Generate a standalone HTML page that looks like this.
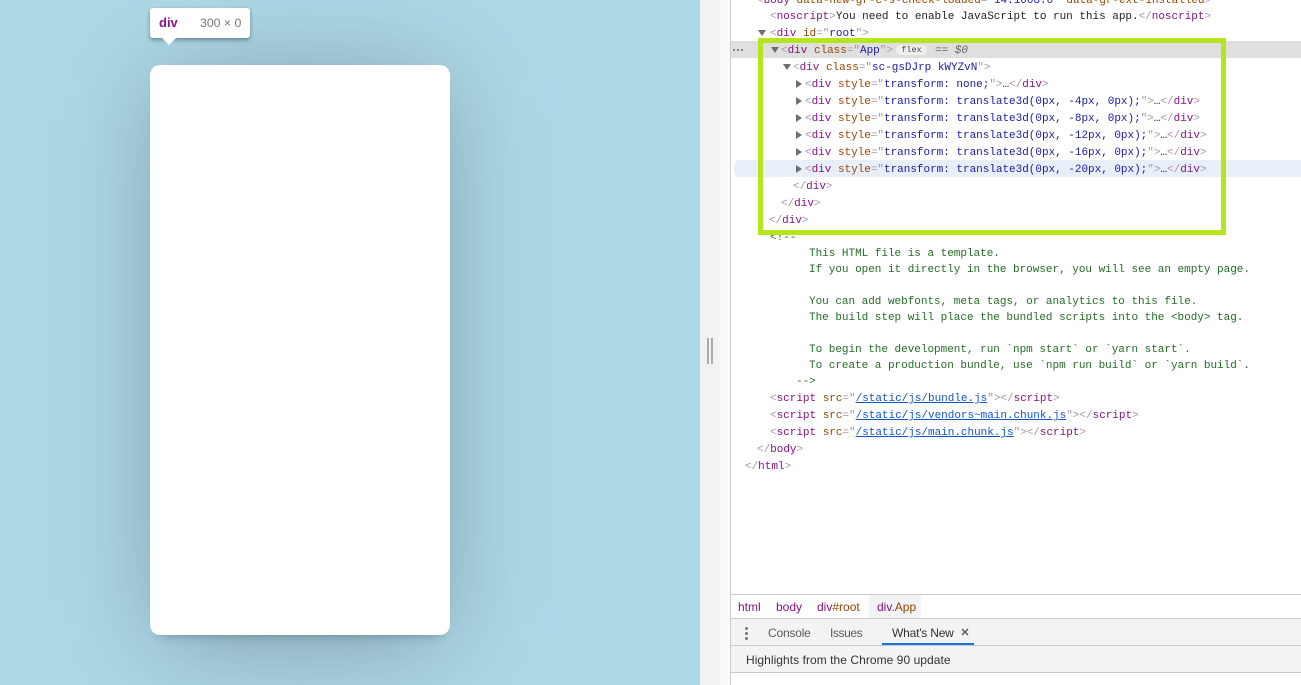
<!DOCTYPE html>
<html>
<head>
<meta charset="utf-8">
<style>
html,body{margin:0;padding:0;width:1301px;height:685px;overflow:hidden;background:#fff}
body{position:relative;font-family:"Liberation Sans",sans-serif}
#left{position:absolute;left:0;top:0;width:700px;height:685px;background:#add8e6;overflow:hidden}
#shade{position:absolute;left:0;top:0;width:700px;height:685px;
background:linear-gradient(90deg,rgba(50,50,73,0) 10px,rgba(50,50,73,.002) 35px,rgba(50,50,73,.009) 60px,rgba(50,50,73,.025) 85px,rgba(50,50,73,.06) 110px,rgba(50,50,73,.117) 135px,rgba(50,50,73,.19) 160px,rgba(50,50,73,.263) 185px,rgba(50,50,73,.32) 210px,rgba(50,50,73,.355) 235px,rgba(50,50,73,.371) 260px,rgba(50,50,73,.38) 300px,rgba(50,50,73,.371) 340px,rgba(50,50,73,.355) 365px,rgba(50,50,73,.32) 390px,rgba(50,50,73,.263) 415px,rgba(50,50,73,.19) 440px,rgba(50,50,73,.117) 465px,rgba(50,50,73,.06) 490px,rgba(50,50,73,.025) 515px,rgba(50,50,73,.009) 540px,rgba(50,50,73,.002) 565px,rgba(50,50,73,0) 590px);
-webkit-mask-image:linear-gradient(180deg,rgba(0,0,0,.023) -20px,rgba(0,0,0,.067) 5px,rgba(0,0,0,.159) 30px,rgba(0,0,0,.309) 55px,rgba(0,0,0,.5) 80px,rgba(0,0,0,.691) 105px,rgba(0,0,0,.841) 130px,rgba(0,0,0,.933) 155px,rgba(0,0,0,.977) 180px,#000 220px,#000 500px,rgba(0,0,0,.977) 540px,rgba(0,0,0,.933) 565px,rgba(0,0,0,.841) 590px,rgba(0,0,0,.691) 615px,rgba(0,0,0,.5) 640px,rgba(0,0,0,.309) 665px,rgba(0,0,0,.159) 690px);
mask-image:linear-gradient(180deg,rgba(0,0,0,.023) -20px,rgba(0,0,0,.067) 5px,rgba(0,0,0,.159) 30px,rgba(0,0,0,.309) 55px,rgba(0,0,0,.5) 80px,rgba(0,0,0,.691) 105px,rgba(0,0,0,.841) 130px,rgba(0,0,0,.933) 155px,rgba(0,0,0,.977) 180px,#000 220px,#000 500px,rgba(0,0,0,.977) 540px,rgba(0,0,0,.933) 565px,rgba(0,0,0,.841) 590px,rgba(0,0,0,.691) 615px,rgba(0,0,0,.5) 640px,rgba(0,0,0,.309) 665px,rgba(0,0,0,.159) 690px)}
#card{position:absolute;left:150px;top:65px;width:300px;height:570px;background:#fff;border-radius:10px;box-shadow:0 10px 10px -10px rgba(50,50,73,.4)}
#tip{position:absolute;left:150px;top:8px;width:100px;height:30px;background:#fff;border-radius:3px;box-shadow:0 2px 4px rgba(0,0,0,.35);font-size:12px;line-height:30px}
#tip b{position:absolute;left:9px;color:#881391;font-size:13px;top:0}
#tip span{position:absolute;left:50px;color:#777;font-size:12.3px;top:0;white-space:pre}
#tipa{position:absolute;left:162px;top:31px;width:14px;height:14px}
#split{position:absolute;left:700px;top:0;width:30px;height:685px;background:linear-gradient(90deg,#f1f1f1 0,#f3f3f3 20px,#fafafa 20px,#fafafa 30px)}
#split i{position:absolute;top:338px;width:2px;height:26px;background:#aaa}
#bl{position:absolute;left:730px;top:0;width:1px;height:685px;background:#ccc}
.l{position:absolute;white-space:pre;font:11px/17px "Liberation Mono",monospace;height:17px;letter-spacing:-.02px;color:#a894a6}
.n{color:#881280}.a{color:#994500}.v{color:#1a1aa6}.c{color:#236e25}.k{color:#1155cc;text-decoration:underline}.t{color:#222}
.rs{position:absolute;left:731px;top:41px;width:570px;height:17px;background:#dfdfdf}
.rh{position:absolute;left:734px;top:160px;width:567px;height:17px;background:#e9eff9;border-radius:5px 0 0 5px}
.ar{position:absolute;background:#6e6e6e}
.r{width:6px;height:8px;clip-path:polygon(0 0,100% 50%,0 100%)}
.d{width:8px;height:6px;clip-path:polygon(0 0,100% 0,50% 100%)}
#flex{position:absolute;left:896px;top:45px;width:31px;height:10px;background:#efefef;border-radius:5px;font:8.5px/11px "Liberation Mono",monospace;color:#444;text-align:center}
#box{position:absolute;left:758px;top:38px;width:458px;height:187px;border:5px solid #b5e61d}
.ui{position:absolute;font-size:12px;line-height:16px;white-space:pre}
.h{position:absolute;left:731px;width:570px;height:1px;background:#ccc}
.dot{position:absolute;width:2px;height:2px;background:#888;top:49px}
</style>
</head>
<body>
<div id="left">
  <div id="shade"></div>
  <div id="card"></div>
  <div id="tip"><b>div</b><span>300 × 0</span></div>
  <svg id="tipa" viewBox="0 0 14 14"><path d="M0 7H14L7 14Z" fill="#fff"/></svg>
</div>
<div id="split"><i style="left:7px"></i><i style="left:11px"></i></div>
<div id="bl"></div>

<div class="rs"></div>
<div class="rh"></div>

<div class="l" style="left:757px;top:-7px">&lt;<span class="n">body</span> <span class="a">data-new-gr-c-s-check-loaded</span>="<span class="v">14.1008.0</span>" <span class="a">data-gr-ext-installed</span>&gt;</div>
<div class="l" style="left:770px;top:9px">&lt;<span class="n">noscript</span>&gt;<span class="t">You need to enable JavaScript to run this app.</span>&lt;/<span class="n">noscript</span>&gt;</div>
<div class="ar d" style="left:758px;top:30px"></div>
<div class="l" style="left:770px;top:26px">&lt;<span class="n">div</span> <span class="a">id</span>="<span class="v">root</span>"&gt;</div>
<div class="dot" style="left:733px"></div><div class="dot" style="left:737px"></div><div class="dot" style="left:741px"></div>
<div class="ar d" style="left:771px;top:47px"></div>
<div class="l" style="left:781px;top:43px">&lt;<span class="n">div</span> <span class="a">class</span>="<span class="v">App</span>"&gt;</div>
<div id="flex">flex</div>
<div class="l" style="left:935px;top:43px;color:#666">== <i>$0</i></div>
<div class="ar d" style="left:783px;top:64px"></div>
<div class="l" style="left:793px;top:60px">&lt;<span class="n">div</span> <span class="a">class</span>="<span class="v">sc-gsDJrp kWYZvN</span>"&gt;</div>

<div class="ar r" style="left:796px;top:80px"></div>
<div class="l" style="left:805px;top:77px">&lt;<span class="n">div</span> <span class="a">style</span>="<span class="v">transform: none;</span>"&gt;<span class="t">…</span>&lt;/<span class="n">div</span>&gt;</div>
<div class="ar r" style="left:796px;top:97px"></div>
<div class="l" style="left:805px;top:94px">&lt;<span class="n">div</span> <span class="a">style</span>="<span class="v">transform: translate3d(0px, -4px, 0px);</span>"&gt;<span class="t">…</span>&lt;/<span class="n">div</span>&gt;</div>
<div class="ar r" style="left:796px;top:114px"></div>
<div class="l" style="left:805px;top:111px">&lt;<span class="n">div</span> <span class="a">style</span>="<span class="v">transform: translate3d(0px, -8px, 0px);</span>"&gt;<span class="t">…</span>&lt;/<span class="n">div</span>&gt;</div>
<div class="ar r" style="left:796px;top:131px"></div>
<div class="l" style="left:805px;top:128px">&lt;<span class="n">div</span> <span class="a">style</span>="<span class="v">transform: translate3d(0px, -12px, 0px);</span>"&gt;<span class="t">…</span>&lt;/<span class="n">div</span>&gt;</div>
<div class="ar r" style="left:796px;top:148px"></div>
<div class="l" style="left:805px;top:145px">&lt;<span class="n">div</span> <span class="a">style</span>="<span class="v">transform: translate3d(0px, -16px, 0px);</span>"&gt;<span class="t">…</span>&lt;/<span class="n">div</span>&gt;</div>
<div class="ar r" style="left:796px;top:165px"></div>
<div class="l" style="left:805px;top:162px">&lt;<span class="n">div</span> <span class="a">style</span>="<span class="v">transform: translate3d(0px, -20px, 0px);</span>"&gt;<span class="t">…</span>&lt;/<span class="n">div</span>&gt;</div>

<div class="l" style="left:793px;top:179px">&lt;/<span class="n">div</span>&gt;</div>
<div class="l" style="left:781px;top:196px">&lt;/<span class="n">div</span>&gt;</div>
<div class="l" style="left:769px;top:213px">&lt;/<span class="n">div</span>&gt;</div>

<div class="l c" style="left:770px;top:230px">&lt;!--</div>
<div class="l c" style="left:809px;top:246px">This HTML file is a template.</div>
<div class="l c" style="left:809px;top:262px">If you open it directly in the browser, you will see an empty page.</div>
<div class="l c" style="left:809px;top:294px">You can add webfonts, meta tags, or analytics to this file.</div>
<div class="l c" style="left:809px;top:310px">The build step will place the bundled scripts into the &lt;body&gt; tag.</div>
<div class="l c" style="left:809px;top:342px">To begin the development, run `npm start` or `yarn start`.</div>
<div class="l c" style="left:809px;top:358px">To create a production bundle, use `npm run build` or `yarn build`.</div>
<div class="l c" style="left:796px;top:374px">--&gt;</div>

<div class="l" style="left:770px;top:391px">&lt;<span class="n">script</span> <span class="a">src</span>="<span class="k">/static/js/bundle.js</span>"&gt;&lt;/<span class="n">script</span>&gt;</div>
<div class="l" style="left:770px;top:408px">&lt;<span class="n">script</span> <span class="a">src</span>="<span class="k">/static/js/vendors~main.chunk.js</span>"&gt;&lt;/<span class="n">script</span>&gt;</div>
<div class="l" style="left:770px;top:425px">&lt;<span class="n">script</span> <span class="a">src</span>="<span class="k">/static/js/main.chunk.js</span>"&gt;&lt;/<span class="n">script</span>&gt;</div>
<div class="l" style="left:757px;top:442px">&lt;/<span class="n">body</span>&gt;</div>
<div class="l" style="left:745px;top:459px">&lt;/<span class="n">html</span>&gt;</div>

<div id="box"></div>

<div style="position:absolute;left:731px;top:594px;width:570px;height:91px;background:#fff"></div>
<div class="h" style="top:594px"></div>
<div style="position:absolute;left:869px;top:595px;width:52px;height:23px;background:#f1f3f4"></div>
<div class="ui" style="left:738px;top:599px;color:#881280">html</div>
<div class="ui" style="left:776px;top:599px;color:#881280">body</div>
<div class="ui" style="left:817px;top:599px;color:#881280">div<span style="color:#994500">#root</span></div>
<div class="ui" style="left:877px;top:599px;color:#881280">div<span style="color:#994500">.App</span></div>
<div class="h" style="top:618px"></div>
<div style="position:absolute;left:731px;top:619px;width:570px;height:26px;background:#f3f3f3"></div>
<div style="position:absolute;left:745px;top:627px;width:3px;height:3px;border-radius:2px;background:#777;box-shadow:0 5px 0 #777,0 10px 0 #777"></div>
<div class="ui" style="left:768px;top:625px;color:#5a5a5a;letter-spacing:-.2px">Console</div>
<div class="ui" style="left:830px;top:625px;color:#5a5a5a;letter-spacing:-.4px">Issues</div>
<div class="ui" style="left:892px;top:625px;color:#333;letter-spacing:-.2px">What's New</div>
<svg style="position:absolute;left:961px;top:628px" width="8" height="8" viewBox="0 0 8 8"><path d="M1 1L7 7M7 1L1 7" stroke="#555" stroke-width="1.4" fill="none"/></svg>
<div style="position:absolute;left:882px;top:643px;width:92px;height:2px;background:#1a73e8"></div>
<div class="h" style="top:645px"></div>
<div style="position:absolute;left:731px;top:646px;width:570px;height:26px;background:#f3f3f3"></div>
<div class="ui" style="left:746px;top:652px;color:#333;letter-spacing:.05px">Highlights from the Chrome 90 update</div>
<div class="h" style="top:672px"></div>
</body>
</html>
